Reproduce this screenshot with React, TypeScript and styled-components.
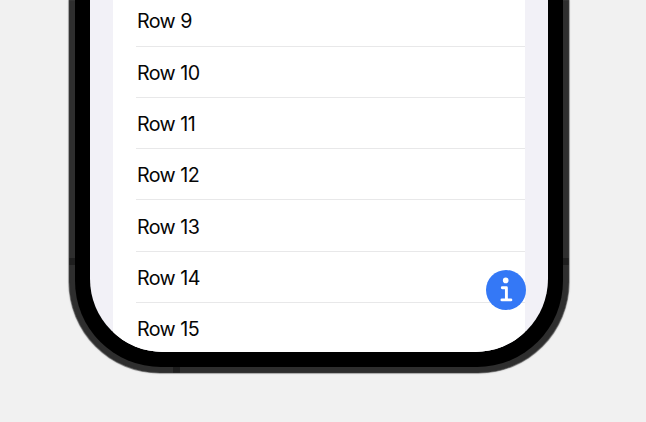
import React from 'react';
import styled, { createGlobalStyle } from 'styled-components';

const GlobalStyle = createGlobalStyle`
  * { box-sizing: border-box; }
  body { margin: 0; background: #f1f1f1; }
`;

const Stage = styled.main`
  width: 646px;
  height: 422px;
  overflow: hidden;
  background: #f1f1f1;
  display: flex;
  align-items: flex-start;
  padding-left: 69px;
  font-family: Inter, "Liberation Sans", sans-serif;
`;

// Metal band; the darker patches are the antenna breaks.
const Band = styled.div`
  display: flex;
  padding: 0 6px 6px;
  border-radius: 0 0 91px 91px;
  background:
    linear-gradient(#1e1e1e, #1e1e1e) 0 258px / 100% 7px no-repeat,
    linear-gradient(#1e1e1e, #1e1e1e) 104px 0 / 7px 100% no-repeat,
    #2e2e2e;
  box-shadow: inset 0 0 1px #777, 0 0 0 0.6px #888, 0 0 2px rgba(0, 0, 0, 0.45);
`;

const Bezel = styled.div`
  display: flex;
  padding: 0 15px 15px;
  border-radius: 0 0 86px 86px;
  background: #000;
`;

const Screen = styled.div`
  position: relative;
  display: flex;
  justify-content: center;
  width: 458px;
  height: 352px;
  overflow: hidden;
  border-radius: 0 0 73px 73px;
  background: #f2f1f7;
`;

const List = styled.ul`
  list-style: none;
  display: flex;
  flex-direction: column;
  justify-content: flex-start;
  margin: 0;
  padding: 0 0 0 23px;
  width: 412px;
  overflow: hidden;
  background: #fff;
`;

const Row = styled.li`
  flex: none;
  height: 51.3px;
  display: flex;
  align-items: center;
  border-bottom: 1px solid #e8e8e9;
  padding: 2px 0 0 0.9px;
  color: #060606;
  font-size: 19.7px;
  letter-spacing: -0.6px;
  word-spacing: 0.3px;
  white-space: nowrap;

  &:first-child { height: 46.5px; padding-bottom: 5px; }
`;

const InfoButton = styled.button`
  position: absolute;
  right: 22px;
  bottom: 42px;
  width: 40px;
  height: 40px;
  padding: 0;
  border: 0;
  border-radius: 50%;
  background: #3478f6;
  display: flex;
`;

const rows = [9, 10, 11, 12, 13, 14, 15];

export default function App() {
  return (
    <Stage>
      <GlobalStyle />
      <Band>
        <Bezel>
          <Screen>
            <List>
              {rows.map(n => <Row key={n}>Row {n}</Row>)}
            </List>
            <InfoButton aria-label="Information">
              <svg width="40" height="40" viewBox="0 0 40 40" fill="none">
                <circle cx="19.7" cy="10.4" r="2.8" fill="#fff" />
                <path d="M16.3 17.7h4.1v12.2M15.9 29.9h9" stroke="#fff" strokeWidth="2.9" strokeLinecap="round" strokeLinejoin="round" />
              </svg>
            </InfoButton>
          </Screen>
        </Bezel>
      </Band>
    </Stage>
  );
}
